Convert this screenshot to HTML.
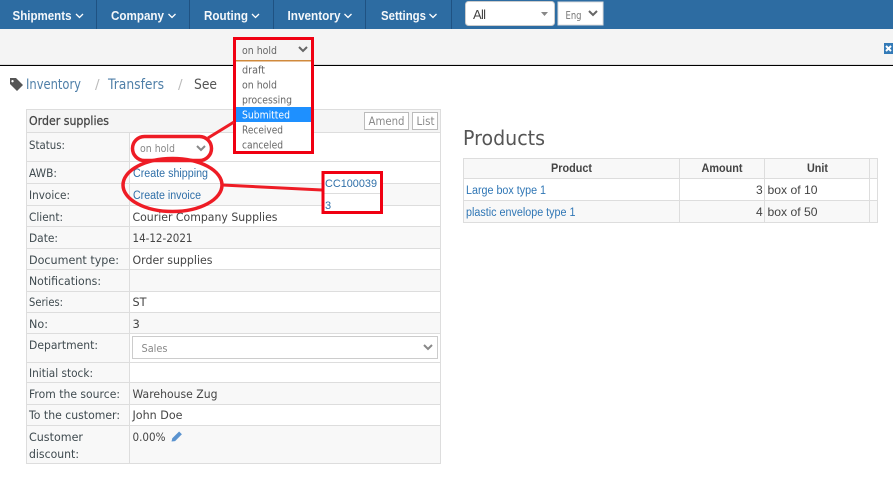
<!DOCTYPE html>
<html><head><meta charset="utf-8"><style>
html,body{margin:0;padding:0;background:#fff;width:893px;height:477px;overflow:hidden}
svg{display:block}
text{font-family:"DejaVu Sans",sans-serif;font-size:11.5px;fill:#444}
.n{font-family:"Liberation Sans",sans-serif;font-weight:bold;font-size:12.5px;fill:#f4f7fa}
.a{font-family:"Liberation Sans",sans-serif;fill:#2f6fa8}
.l{fill:#3f4a4f}
.p{font-family:"Liberation Sans",sans-serif;font-size:11.5px;fill:#2f76b5}
.h{font-family:"Liberation Sans",sans-serif;font-weight:bold;font-size:11.5px;fill:#444}
.m{fill:#666;font-size:10.5px}
.g{fill:#888;font-size:10.5px}
.c{fill:none;stroke:#fff;stroke-width:1.3}
.d{fill:none;stroke:#666;stroke-width:2}
</style></head><body>
<svg width="893" height="477" viewBox="0 0 893 477" xmlns="http://www.w3.org/2000/svg">
<rect width="893" height="477" fill="#fff"/>
<rect width="893" height="29" fill="#2d6ca2"/>
<rect y="29" width="893" height="36" fill="#f4f4f4"/>
<rect y="64" width="893" height="1" fill="#ddd"/>
<rect y="65" width="893" height="1" fill="#000"/>
<g fill="#1f5282"><rect x="96" width="1" height="29"/><rect x="189" width="1" height="29"/><rect x="273" width="1" height="29"/><rect x="365" width="1" height="29"/><rect x="451" width="1" height="29"/></g>
<text class="n" x="12.5" y="20" textLength="59" lengthAdjust="spacingAndGlyphs">Shipments</text>
<text class="n" x="111" y="20" textLength="53" lengthAdjust="spacingAndGlyphs">Company</text>
<text class="n" x="204" y="20" textLength="44" lengthAdjust="spacingAndGlyphs">Routing</text>
<text class="n" x="287.500" y="20" textLength="53" lengthAdjust="spacingAndGlyphs">Inventory</text>
<text class="n" x="381" y="20" textLength="45" lengthAdjust="spacingAndGlyphs">Settings</text>
<path class="c" d="M76 14l3.500 3.500 3.500-3.500M168.500 14l3.500 3.500 3.500-3.500M252 14l3.500 3.500 3.500-3.500M344.500 14l3.500 3.500 3.500-3.500M429.500 14l3.500 3.500 3.500-3.500"/>
<rect x="465.500" y="1.500" width="89" height="24" rx="3" fill="#fff" stroke="#ccc"/>
<text x="473" y="19" style="font-family:'Liberation Sans',sans-serif;font-size:13px;fill:#444" textLength="13">All</text>
<path d="M541 12h7l-3.500 4z" fill="#888"/>
<rect x="558" y="2" width="45" height="23" fill="#fff" stroke="#ddd"/>
<text x="565.500" y="19" style="font-size:11px;fill:#777" textLength="16" lengthAdjust="spacingAndGlyphs">Eng</text>
<path class="d" d="M589 11l4 4 4-4"/>
<rect x="884" y="43" width="9" height="11" fill="#337ab7"/>
<path d="M886 46l5 5M891 46l-5 5" stroke="#fff" stroke-width="2"/>

<path fill-rule="evenodd" d="M10 78h6l7 7-6 6-7-7zM12.500 80a1.200 1.200 0 1 0 .01 0z" fill="#555"/>
<text x="26" y="89" style="font-size:14px;fill:#4f7fa8" textLength="55" lengthAdjust="spacingAndGlyphs">Inventory</text>
<text x="95" y="89" style="font-size:13.500px;fill:#bbb">/</text>
<text x="108" y="89" style="font-size:14px;fill:#4f7fa8" textLength="56" lengthAdjust="spacingAndGlyphs">Transfers</text>
<text x="178" y="89" style="font-size:13.500px;fill:#bbb">/</text>
<text x="194" y="89" style="font-size:14px;fill:#555" textLength="23" lengthAdjust="spacingAndGlyphs">See</text>

<!-- left table -->
<g fill="#f8f8f8">
<rect x="27" y="110" width="413" height="22" fill="#f5f5f5"/>
<rect x="27" y="132" width="102" height="331"/>
<rect x="130" y="183" width="310" height="22"/>
<rect x="130" y="226" width="310" height="22"/>
<rect x="130" y="269" width="310" height="22"/>
<rect x="130" y="312" width="310" height="21"/>
<rect x="130" y="382" width="310" height="22"/>
<rect x="130" y="425" width="310" height="38"/>
</g>
<g fill="none" stroke="#ddd" stroke-width="1">
<rect x="26.500" y="109.500" width="414" height="354"/>
<path d="M129.500 132V463M27 132.500H440M27 161.500H440M27 183.500H440M27 205.500H440M27 226.500H440M27 248.500H440M27 269.500H440M27 291.500H440M27 312.500H440M27 333.500H440M27 362.500H440M27 382.500H440M27 404.500H440M27 425.500H440"/>
</g>
<text x="29" y="125" style="font-size:12px;fill:#444;stroke:#444;stroke-width:.25" textLength="80" lengthAdjust="spacingAndGlyphs">Order supplies</text>
<rect x="364.500" y="112.500" width="44" height="17" fill="#fff" stroke="#bbb"/>
<text x="368.500" y="125" style="font-size:11.500px;fill:#8a8a8a" textLength="36" lengthAdjust="spacingAndGlyphs">Amend</text>
<rect x="412.500" y="112.500" width="25" height="17" fill="#fff" stroke="#bbb"/>
<text x="416.500" y="125" style="font-size:11.500px;fill:#8a8a8a" textLength="18" lengthAdjust="spacingAndGlyphs">List</text>

<text class="l" x="29" y="149" textLength="36" lengthAdjust="spacingAndGlyphs">Status:</text>
<text class="l" x="29" y="177" textLength="28" lengthAdjust="spacingAndGlyphs">AWB:</text>
<text class="l" x="29" y="199" textLength="41" lengthAdjust="spacingAndGlyphs">Invoice:</text>
<text class="l" x="29" y="221" textLength="34" lengthAdjust="spacingAndGlyphs">Client:</text>
<text class="l" x="29" y="242" textLength="29" lengthAdjust="spacingAndGlyphs">Date:</text>
<text class="l" x="29" y="264" textLength="90" lengthAdjust="spacingAndGlyphs">Document type:</text>
<text class="l" x="29" y="285" textLength="72" lengthAdjust="spacingAndGlyphs">Notifications:</text>
<text class="l" x="29" y="306" textLength="34" lengthAdjust="spacingAndGlyphs">Series:</text>
<text class="l" x="29" y="328" textLength="19" lengthAdjust="spacingAndGlyphs">No:</text>
<text class="l" x="29" y="349" textLength="69" lengthAdjust="spacingAndGlyphs">Department:</text>
<text class="l" x="29" y="377" textLength="64" lengthAdjust="spacingAndGlyphs">Initial stock:</text>
<text class="l" x="29" y="398" textLength="91" lengthAdjust="spacingAndGlyphs">From the source:</text>
<text class="l" x="29" y="419" textLength="91" lengthAdjust="spacingAndGlyphs">To the customer:</text>
<text class="l" x="29" y="441" textLength="54" lengthAdjust="spacingAndGlyphs">Customer</text>
<text class="l" x="29" y="458" textLength="50" lengthAdjust="spacingAndGlyphs">discount:</text>

<text x="133" y="177" class="a" textLength="75" lengthAdjust="spacingAndGlyphs" style="font-size:11.5px">Create shipping</text>
<text x="133" y="199" class="a" textLength="68" lengthAdjust="spacingAndGlyphs" style="font-size:11.5px">Create invoice</text>
<text x="132.500" y="221" textLength="145" lengthAdjust="spacingAndGlyphs">Courier Company Supplies</text>
<text x="132.500" y="242" textLength="60" lengthAdjust="spacingAndGlyphs">14-12-2021</text>
<text x="132.500" y="264" textLength="80" lengthAdjust="spacingAndGlyphs">Order supplies</text>
<text x="132.500" y="306" textLength="14" lengthAdjust="spacingAndGlyphs">ST</text>
<text x="132.500" y="328">3</text>
<text x="132.500" y="398" textLength="85" lengthAdjust="spacingAndGlyphs">Warehouse Zug</text>
<text x="132.500" y="419" textLength="50" lengthAdjust="spacingAndGlyphs">John Doe</text>
<text x="132.500" y="441" textLength="33" lengthAdjust="spacingAndGlyphs">0.00%</text>
<path d="M171.500 441.500l.8-3.200 6.800-6.800 2.800 2.800-6.800 6.800z" fill="#5b93cf"/>

<!-- status select -->
<text x="140" y="152" class="g" textLength="35" lengthAdjust="spacingAndGlyphs">on hold</text>
<path class="d" d="M197 146l4 4 4-4" style="stroke:#888"/>
<!-- department select -->
<rect x="132.500" y="336.500" width="305" height="22" fill="#fff" stroke="#ccc"/>
<text x="141.500" y="352" class="g" textLength="26" lengthAdjust="spacingAndGlyphs" style="font-size:11px">Sales</text>
<path class="d" d="M424 345l4 4 4-4" style="stroke:#888"/>

<!-- dropdown -->
<rect x="236" y="39" width="76" height="113" fill="#fff"/>
<rect x="236" y="39" width="76" height="21" fill="#f4f4f4"/>
<rect x="236" y="60" width="76" height="1.500" fill="#d08a3c"/>
<rect x="236" y="61.500" width="76" height="90" fill="#fff"/>
<rect x="236" y="107" width="76" height="15" fill="#1e90ff"/>
<text x="242" y="54" class="m" textLength="35" lengthAdjust="spacingAndGlyphs">on hold</text>
<path class="d" d="M299 47l4 4 4-4"/>
<text x="242" y="73.500" class="m" textLength="23" lengthAdjust="spacingAndGlyphs">draft</text>
<text x="242" y="88.500" class="m" textLength="35" lengthAdjust="spacingAndGlyphs">on hold</text>
<text x="242" y="103.500" class="m" textLength="50" lengthAdjust="spacingAndGlyphs">processing</text>
<text x="242" y="118.500" class="m" textLength="48" lengthAdjust="spacingAndGlyphs" style="fill:#fff">Submitted</text>
<text x="242" y="133.500" class="m" textLength="41" lengthAdjust="spacingAndGlyphs">Received</text>
<text x="242" y="148.500" class="m" textLength="41" lengthAdjust="spacingAndGlyphs">canceled</text>
<rect x="234.500" y="38.500" width="78" height="114" fill="none" stroke="#f00012" stroke-width="3"/>

<!-- annotations -->
<path d="M208 138L234 122" stroke="#ee1c25" stroke-width="3" fill="none"/>
<rect x="132.500" y="136.500" width="79" height="24" rx="12" fill="none" stroke="#ee1c25" stroke-width="3.500"/>
<ellipse cx="172.500" cy="185" rx="49.500" ry="26.500" fill="none" stroke="#ee1c25" stroke-width="3.500"/>
<path d="M222 185L322 190" stroke="#ee1c25" stroke-width="3" fill="none"/>
<rect x="323" y="172" width="59" height="41" fill="#fff"/>
<rect x="323" y="193" width="58" height="1" fill="#ddd"/>
<text x="325" y="187" class="a" textLength="52" lengthAdjust="spacingAndGlyphs" style="font-size:11px">CC100039</text>
<text x="325" y="209" class="a" style="font-size:11px">3</text>
<rect x="323" y="172.500" width="58.500" height="40" fill="none" stroke="#f00012" stroke-width="3"/>

<!-- products -->
<text x="463" y="145" style="font-size:20px;fill:#555" textLength="82" lengthAdjust="spacingAndGlyphs">Products</text>
<rect x="464" y="159" width="414" height="20" fill="#f8f8f8"/>
<rect x="464" y="201" width="414" height="22" fill="#f8f8f8"/>
<g fill="none" stroke="#ddd"><rect x="463.500" y="158.500" width="414" height="64"/><path d="M464 178.500H877M464 200.500H877M679.500 159V222M764.500 159V222M869.500 159V222"/></g>
<text class="h" x="551" y="172" textLength="41" lengthAdjust="spacingAndGlyphs">Product</text>
<text class="h" x="701.500" y="172" textLength="41" lengthAdjust="spacingAndGlyphs">Amount</text>
<text class="h" x="807" y="172" textLength="21" lengthAdjust="spacingAndGlyphs">Unit</text>
<text class="p" x="466" y="194" textLength="80" lengthAdjust="spacingAndGlyphs">Large box type 1</text>
<text class="p" x="466" y="216" textLength="109.500" lengthAdjust="spacingAndGlyphs">plastic envelope type 1</text>
<text x="756" y="194" style="font-family:'Liberation Sans',sans-serif;font-size:12px">3</text>
<text x="756" y="216" style="font-family:'Liberation Sans',sans-serif;font-size:12px">4</text>
<text x="767.500" y="194" textLength="50" lengthAdjust="spacingAndGlyphs" style="font-family:'Liberation Sans',sans-serif;font-size:12px">box of 10</text>
<text x="767.500" y="216" textLength="50" lengthAdjust="spacingAndGlyphs" style="font-family:'Liberation Sans',sans-serif;font-size:12px">box of 50</text>
</svg>
</body></html>
